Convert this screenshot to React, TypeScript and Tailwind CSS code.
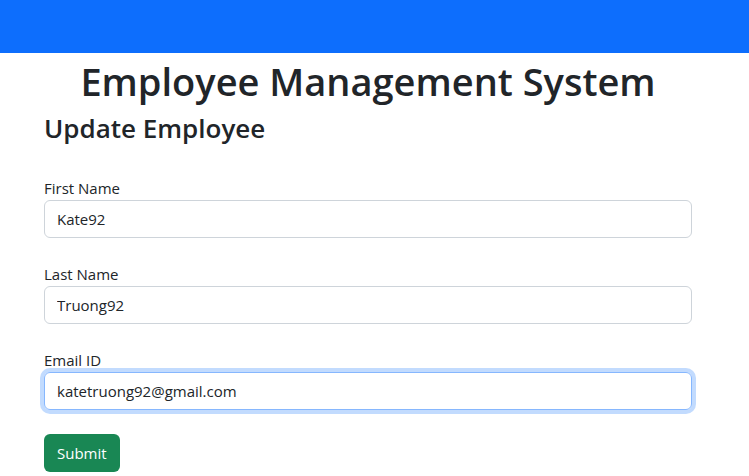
export default function App() {
  return (
    <div className="min-h-screen bg-white text-[#212529] font-['Open_Sans',sans-serif]">
      <nav className="h-[53px] bg-[#0d6efd]" />
      <div className="mx-[44px] w-[648px]">
        <h1 className="mt-[4px] text-center text-[38px] leading-[48px] font-semibold">Employee Management System</h1>
        <h3 className="mt-[7px] text-[26px] leading-[32px] font-semibold">Update Employee</h3>
        <form className="mt-[32px] flex flex-col gap-[24px]" onSubmit={(e) => e.preventDefault()}>
          <div>
            <label className="block text-[15px] leading-[24px]">First Name</label>
            <input
              defaultValue="Kate92"
              className="block h-[38px] w-full rounded-[6px] border border-[#ced4da] px-[12px] text-[15px] outline-none"
            />
          </div>
          <div>
            <label className="block text-[15px] leading-[24px]">Last Name</label>
            <input
              defaultValue="Truong92"
              className="block h-[38px] w-full rounded-[6px] border border-[#ced4da] px-[12px] text-[15px] outline-none"
            />
          </div>
          <div>
            <label className="block text-[15px] leading-[24px]">Email ID</label>
            <input
              defaultValue="katetruong92@gmail.com"
              className="block h-[38px] w-full rounded-[6px] border border-[#86b7fe] px-[12px] text-[15px] outline-none shadow-[0_0_0_4px_rgba(13,110,253,0.25)]"
            />
          </div>
          <div>
            <button className="h-[38px] rounded-[6px] bg-[#198754] px-[13px] text-[15px] text-white">Submit</button>
          </div>
        </form>
      </div>
    </div>
  );
}
